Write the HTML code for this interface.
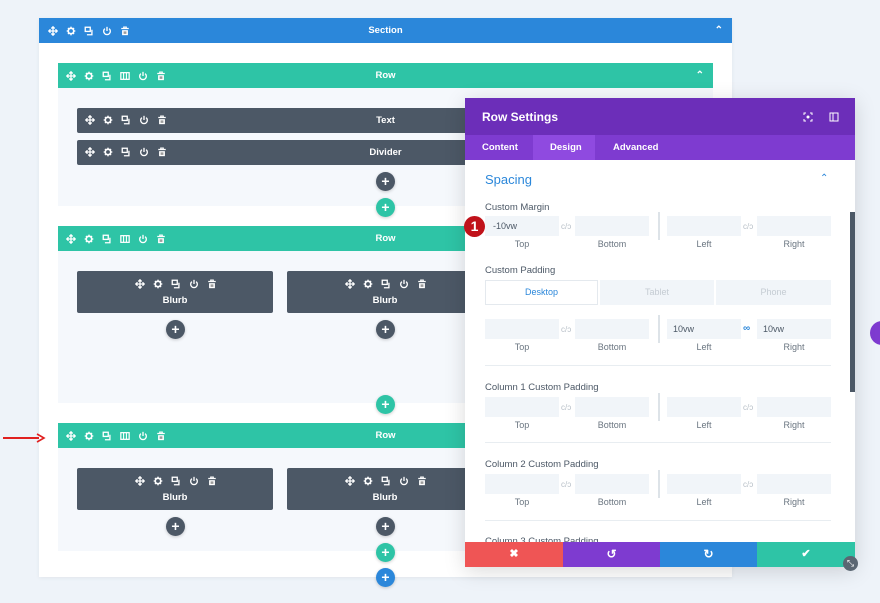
<!DOCTYPE html>
<html><head><meta charset="utf-8"><style>
*{box-sizing:border-box;margin:0;padding:0}
body{width:880px;height:603px;overflow:hidden;background:#eef3f9;font-family:"Liberation Sans",sans-serif;position:relative}
.a{position:absolute}
.bar{position:absolute;color:#fff;font-size:9.5px;font-weight:bold;text-align:center}
.ic{position:absolute;display:flex;gap:8px}
.ic svg{width:10px;height:10px}
.c{position:absolute;width:19px;height:19px;border-radius:50%;color:#fff;font-size:14px;line-height:19px;text-align:center;font-weight:bold;box-shadow:0 1px 3px rgba(0,0,0,.2)}
.dk{background:#4c5866}.tl{background:#2ec4a6}.bl{background:#2b87da}
.lbl{position:absolute;font-size:9.5px;color:#4c5866}
.in{position:absolute;height:20px;background:#f1f5f9;font-size:9px;color:#4c5866;padding:5px 6px}
.sub{position:absolute;font-size:9px;color:#6a7580;text-align:center;width:74px}
.lk{position:absolute;font-size:8px;color:#b8c0c8}
.vl{position:absolute;width:2px;background:#dde3e8}
.hr{position:absolute;left:485px;width:346px;height:1px;background:#e8edf1}
</style></head><body>
<svg style="display:none">
<symbol id="mv" viewBox="0 0 12 12"><path d="M6 1v10M1 6h10M4 3l2-2 2 2M4 9l2 2 2-2M3 4L1 6l2 2M9 4l2 2-2 2" stroke="#fff" stroke-width="1.6" fill="none"/></symbol>
<symbol id="gr" viewBox="0 0 12 12"><circle cx="6" cy="6" r="3.3" stroke="#fff" stroke-width="2" fill="none"/><path d="M6 0.8v2M6 9.2v2M0.8 6h2M9.2 6h2M2.3 2.3l1.4 1.4M8.3 8.3l1.4 1.4M2.3 9.7l1.4-1.4M8.3 3.7l1.4-1.4" stroke="#fff" stroke-width="1.5"/></symbol>
<symbol id="dp" viewBox="0 0 12 12"><rect x="1.5" y="1.5" width="6" height="5" stroke="#fff" stroke-width="1.6" fill="none"/><path d="M9.5 4.5v6h-6" stroke="#fff" stroke-width="1.6" fill="none"/></symbol>
<symbol id="cl" viewBox="0 0 12 12"><rect x="1" y="2" width="10" height="8" stroke="#fff" stroke-width="1.5" fill="none"/><path d="M4.3 2v8M7.7 2v8" stroke="#fff" stroke-width="1.3"/></symbol>
<symbol id="pw" viewBox="0 0 12 12"><path d="M3.5 3.2A4 4 0 1 0 8.5 3.2" stroke="#fff" stroke-width="1.6" fill="none"/><path d="M6 1v5" stroke="#fff" stroke-width="1.6"/></symbol>
<symbol id="tr" viewBox="0 0 12 12"><path d="M1.5 3h9M4.5 3V1.3h3V3" stroke="#fff" stroke-width="1.4" fill="none"/><rect x="2.5" y="5" width="7" height="6" fill="#fff"/><path d="M5 6.5v3M7 6.5v3" stroke="#555" stroke-width="1"/></symbol>
</svg>

<div class="a" style="left:39px;top:18px;width:693px;height:559px;background:#fff;box-shadow:0 1px 4px rgba(0,0,0,.06)"></div>
<div class="bar" style="left:39px;top:18px;width:693px;height:25px;background:#2b87da;line-height:25px">Section<span style="position:absolute;right:9px;font-size:10px">&#8963;</span></div>
<div class="ic" style="left:48px;top:26px"><svg><use href="#mv"/></svg><svg><use href="#gr"/></svg><svg><use href="#dp"/></svg><svg><use href="#pw"/></svg><svg><use href="#tr"/></svg></div>

<div class="a" style="left:58px;top:63px;width:655px;height:143px;background:#f5f8fc"></div>
<div class="bar" style="left:58px;top:63px;width:655px;height:25px;background:#2ec4a6;line-height:25px">Row<span style="position:absolute;right:9px;font-size:10px">&#8963;</span></div>
<div class="ic" style="left:66px;top:71px"><svg><use href="#mv"/></svg><svg><use href="#gr"/></svg><svg><use href="#dp"/></svg><svg><use href="#cl"/></svg><svg><use href="#pw"/></svg><svg><use href="#tr"/></svg></div>
<div class="bar" style="left:77px;top:108px;width:617px;height:25px;background:#4c5866;line-height:25px;border-radius:2px">Text</div>
<div class="ic" style="left:85px;top:115px"><svg><use href="#mv"/></svg><svg><use href="#gr"/></svg><svg><use href="#dp"/></svg><svg><use href="#pw"/></svg><svg><use href="#tr"/></svg></div>
<div class="bar" style="left:77px;top:140px;width:617px;height:25px;background:#4c5866;line-height:25px;border-radius:2px">Divider</div>
<div class="ic" style="left:85px;top:147px"><svg><use href="#mv"/></svg><svg><use href="#gr"/></svg><svg><use href="#dp"/></svg><svg><use href="#pw"/></svg><svg><use href="#tr"/></svg></div>
<div class="c dk" style="left:376px;top:172px">+</div>
<div class="c tl" style="left:376px;top:198px">+</div>

<div class="a" style="left:58px;top:226px;width:655px;height:177px;background:#f5f8fc"></div>
<div class="bar" style="left:58px;top:226px;width:655px;height:25px;background:#2ec4a6;line-height:25px">Row</div>
<div class="ic" style="left:66px;top:234px"><svg><use href="#mv"/></svg><svg><use href="#gr"/></svg><svg><use href="#dp"/></svg><svg><use href="#cl"/></svg><svg><use href="#pw"/></svg><svg><use href="#tr"/></svg></div>
<div class="bar" style="left:77px;top:271px;width:196px;height:42px;background:#4c5866;border-radius:2px;padding-top:24px">Blurb</div>
<div class="ic" style="left:135px;top:279px"><svg><use href="#mv"/></svg><svg><use href="#gr"/></svg><svg><use href="#dp"/></svg><svg><use href="#pw"/></svg><svg><use href="#tr"/></svg></div>
<div class="bar" style="left:287px;top:271px;width:196px;height:42px;background:#4c5866;border-radius:2px;padding-top:24px">Blurb</div>
<div class="ic" style="left:345px;top:279px"><svg><use href="#mv"/></svg><svg><use href="#gr"/></svg><svg><use href="#dp"/></svg><svg><use href="#pw"/></svg><svg><use href="#tr"/></svg></div>
<div class="c dk" style="left:166px;top:320px">+</div>
<div class="c dk" style="left:376px;top:320px">+</div>
<div class="c tl" style="left:376px;top:395px">+</div>

<div class="a" style="left:58px;top:423px;width:655px;height:128px;background:#f5f8fc"></div>
<div class="bar" style="left:58px;top:423px;width:655px;height:25px;background:#2ec4a6;line-height:25px">Row</div>
<div class="ic" style="left:66px;top:431px"><svg><use href="#mv"/></svg><svg><use href="#gr"/></svg><svg><use href="#dp"/></svg><svg><use href="#cl"/></svg><svg><use href="#pw"/></svg><svg><use href="#tr"/></svg></div>
<div class="bar" style="left:77px;top:468px;width:196px;height:42px;background:#4c5866;border-radius:2px;padding-top:24px">Blurb</div>
<div class="ic" style="left:135px;top:476px"><svg><use href="#mv"/></svg><svg><use href="#gr"/></svg><svg><use href="#dp"/></svg><svg><use href="#pw"/></svg><svg><use href="#tr"/></svg></div>
<div class="bar" style="left:287px;top:468px;width:196px;height:42px;background:#4c5866;border-radius:2px;padding-top:24px">Blurb</div>
<div class="ic" style="left:345px;top:476px"><svg><use href="#mv"/></svg><svg><use href="#gr"/></svg><svg><use href="#dp"/></svg><svg><use href="#pw"/></svg><svg><use href="#tr"/></svg></div>
<div class="c dk" style="left:166px;top:517px">+</div>
<div class="c dk" style="left:376px;top:517px">+</div>
<div class="c tl" style="left:376px;top:543px">+</div>
<div class="c bl" style="left:376px;top:568px">+</div>

<div class="a" style="left:3px;top:437px;width:36px;height:2px;background:#e02020"></div>
<svg class="a" style="left:36px;top:433px" width="10" height="10"><path d="M1 1l7 4-7 4" stroke="#e02020" stroke-width="1.6" fill="none"/></svg>

<div class="a" style="left:870px;top:321px;width:24px;height:24px;border-radius:50%;background:#7e3bd0"></div>

<div class="a" style="left:465px;top:98px;width:390px;height:469px;background:#fff;box-shadow:0 4px 20px rgba(0,0,0,.15)"></div>
<div class="a" style="left:465px;top:98px;width:390px;height:37px;background:#6c2eb9;color:#fff;font-size:12px;font-weight:bold;padding:12px 17px">Row Settings</div>
<svg class="a" style="left:803px;top:112px" width="10" height="10"><path d="M1 3V1h2M7 1h2v2M9 7v2H7M3 9H1V7" stroke="#fff" fill="none"/><circle cx="5" cy="5" r="1.5" fill="#fff"/></svg>
<svg class="a" style="left:829px;top:112px" width="10" height="10"><rect x="1" y="1" width="8" height="8" stroke="#fff" fill="none"/><path d="M4 1v8" stroke="#fff"/></svg>
<div class="a" style="left:465px;top:135px;width:390px;height:25px;background:#7e3bd0"></div>
<div class="a" style="left:533px;top:135px;width:62px;height:25px;background:#8f4ae0"></div>
<div class="a" style="left:482px;top:142px;color:#fff;font-size:9.5px;font-weight:bold">Content</div>
<div class="a" style="left:550px;top:142px;color:#fff;font-size:9.5px;font-weight:bold">Design</div>
<div class="a" style="left:613px;top:142px;color:#fff;font-size:9.5px;font-weight:bold">Advanced</div>
<div class="a" style="left:485px;top:172px;color:#2b87da;font-size:13px">Spacing</div>
<div class="a" style="left:820px;top:173px;color:#2b87da;font-size:10px">&#8963;</div>
<div class="a" style="left:850px;top:212px;width:5px;height:180px;background:#4c5866"></div>

<div class="lbl" style="left:485px;top:202px">Custom Margin</div>
<div class="in" style="left:485px;top:216px;width:74px;padding-left:8px">-10vw</div><div class="lk" style="left:561px;top:222px">c/ɔ</div><div class="in" style="left:575px;top:216px;width:74px"></div>
<div class="vl" style="left:658px;top:212px;height:28px"></div>
<div class="in" style="left:667px;top:216px;width:74px"></div><div class="lk" style="left:743px;top:222px">c/ɔ</div><div class="in" style="left:757px;top:216px;width:74px"></div>
<div class="sub" style="left:485px;top:239px">Top</div><div class="sub" style="left:575px;top:239px">Bottom</div><div class="sub" style="left:667px;top:239px">Left</div><div class="sub" style="left:757px;top:239px">Right</div>
<div class="a" style="left:464px;top:216px;width:21px;height:21px;border-radius:50%;background:#c0121a;color:#fff;font-size:14px;font-weight:bold;text-align:center;line-height:21px">1</div>

<div class="lbl" style="left:485px;top:265px">Custom Padding</div>
<div class="a" style="left:485px;top:280px;width:113px;height:25px;border:1px solid #e4e9ee;color:#2b87da;font-size:9px;text-align:center;line-height:23px">Desktop</div>
<div class="a" style="left:600px;top:280px;width:114px;height:25px;background:#f1f5f9;color:#c5ccd3;font-size:9px;text-align:center;line-height:25px">Tablet</div>
<div class="a" style="left:716px;top:280px;width:115px;height:25px;background:#f1f5f9;color:#c5ccd3;font-size:9px;text-align:center;line-height:25px">Phone</div>
<div class="in" style="left:485px;top:319px;width:74px"></div><div class="lk" style="left:561px;top:325px">c/ɔ</div><div class="in" style="left:575px;top:319px;width:74px"></div>
<div class="vl" style="left:658px;top:315px;height:28px"></div>
<div class="in" style="left:667px;top:319px;width:74px">10vw</div><div class="lk" style="left:743px;top:323px;color:#2b87da;font-weight:bold;font-size:10px">∞</div><div class="in" style="left:757px;top:319px;width:74px">10vw</div>
<div class="sub" style="left:485px;top:342px">Top</div><div class="sub" style="left:575px;top:342px">Bottom</div><div class="sub" style="left:667px;top:342px">Left</div><div class="sub" style="left:757px;top:342px">Right</div>
<div class="hr" style="top:365px"></div>

<div class="lbl" style="left:485px;top:382px">Column 1 Custom Padding</div>
<div class="in" style="left:485px;top:397px;width:74px"></div><div class="lk" style="left:561px;top:403px">c/ɔ</div><div class="in" style="left:575px;top:397px;width:74px"></div>
<div class="vl" style="left:658px;top:393px;height:28px"></div>
<div class="in" style="left:667px;top:397px;width:74px"></div><div class="lk" style="left:743px;top:403px">c/ɔ</div><div class="in" style="left:757px;top:397px;width:74px"></div>
<div class="sub" style="left:485px;top:420px">Top</div><div class="sub" style="left:575px;top:420px">Bottom</div><div class="sub" style="left:667px;top:420px">Left</div><div class="sub" style="left:757px;top:420px">Right</div>
<div class="hr" style="top:442px"></div>

<div class="lbl" style="left:485px;top:459px">Column 2 Custom Padding</div>
<div class="in" style="left:485px;top:474px;width:74px"></div><div class="lk" style="left:561px;top:480px">c/ɔ</div><div class="in" style="left:575px;top:474px;width:74px"></div>
<div class="vl" style="left:658px;top:470px;height:28px"></div>
<div class="in" style="left:667px;top:474px;width:74px"></div><div class="lk" style="left:743px;top:480px">c/ɔ</div><div class="in" style="left:757px;top:474px;width:74px"></div>
<div class="sub" style="left:485px;top:497px">Top</div><div class="sub" style="left:575px;top:497px">Bottom</div><div class="sub" style="left:667px;top:497px">Left</div><div class="sub" style="left:757px;top:497px">Right</div>
<div class="hr" style="top:520px"></div>
<div class="lbl" style="left:485px;top:536px">Column 3 Custom Padding</div>

<div class="a" style="left:465px;top:542px;width:98px;height:25px;background:#ef5555;color:#fff;text-align:center;line-height:25px;font-size:11px;font-weight:bold">✖</div>
<div class="a" style="left:563px;top:542px;width:97px;height:25px;background:#7e3bd0;color:#fff;text-align:center;line-height:25px;font-size:12px;font-weight:bold">↺</div>
<div class="a" style="left:660px;top:542px;width:97px;height:25px;background:#2b87da;color:#fff;text-align:center;line-height:25px;font-size:12px;font-weight:bold">↻</div>
<div class="a" style="left:757px;top:542px;width:98px;height:25px;background:#2ec4a6;color:#fff;text-align:center;line-height:25px;font-size:11px;font-weight:bold">✔</div>
<div class="a" style="left:843px;top:556px;width:15px;height:15px;border-radius:50%;background:#5a6672;color:#fff;font-size:9px;text-align:center;line-height:15px">⤡</div>
</body></html>
